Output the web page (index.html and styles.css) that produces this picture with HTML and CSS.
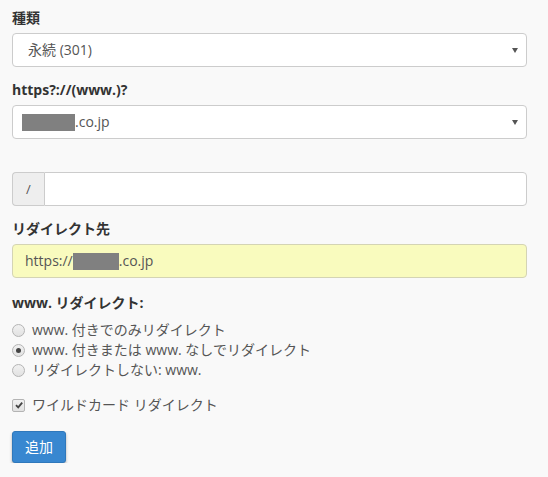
FILE: index.html
```html
<!DOCTYPE html>
<html lang="ja">
<head>
<meta charset="utf-8">
<title>リダイレクトの追加</title>
<link rel="stylesheet" href="styles.css">
</head>
<body>
<form class="form">
  <div class="form-group">
    <label class="label">種類</label>
    <div class="select select-indent"><span class="select-text">永続 (301)</span><span class="caret"></span></div>
  </div>
  <div class="form-group">
    <label class="label">https?://(www.)?</label>
    <div class="select"><span class="select-text"><span class="redact redact-a"></span>.co.jp</span><span class="caret"></span></div>
  </div>
  <div class="form-group spaced">
    <div class="input-group">
      <span class="addon">/</span>
      <div class="control control-plain"></div>
    </div>
  </div>
  <div class="form-group">
    <label class="label">リダイレクト先</label>
    <div class="control control-yellow">https://<span class="redact redact-b"></span>.co.jp</div>
  </div>
  <div class="form-group group-www">
    <label class="label">www. リダイレクト:</label>
    <div class="radios">
      <div class="option"><span class="radio"></span><span>www. 付きでのみリダイレクト</span></div>
      <div class="option"><span class="radio checked"></span><span>www. 付きまたは www. なしでリダイレクト</span></div>
      <div class="option"><span class="radio"></span><span>リダイレクトしない: www.</span></div>
    </div>
  </div>
  <div class="form-group group-check">
    <div class="option"><span class="checkbox"><svg viewBox="0 0 10 10" width="10" height="10"><path d="M2 5.2 L4.2 7.4 L8.2 2.6" fill="none" stroke="#444" stroke-width="1.8"/></svg></span><span>ワイルドカード リダイレクト</span></div>
  </div>
  <div class="actions">
    <button type="button" class="btn">追加</button>
  </div>
</form>
</body>
</html>
```

FILE: styles.css
```css
html, body {
  margin: 0;
  padding: 0;
  background: #f9f9f9;
}
body {
  font-family: "Open Sans", "Noto Sans CJK JP", sans-serif;
  font-size: 14px;
  line-height: 20px;
  color: #333;
}
.form {
  padding: 8px 21px 0 12px;
}
.form-group {
  margin-bottom: 13px;
}
.label {
  display: block;
  font-weight: bold;
  color: #333;
  margin-bottom: 5px;
}
.select, .control {
  box-sizing: border-box;
  height: 34px;
  border: 1px solid #ccc;
  border-radius: 4px;
  background: #fff;
  color: #555;
  display: flex;
  align-items: center;
}
.select {
  justify-content: space-between;
  padding: 0 8px 0 9px;
}
.select-indent {
  padding-left: 15px;
}
.select-text {
  display: flex;
  align-items: center;
}
.caret {
  width: 0;
  height: 0;
  border-left: 3px solid transparent;
  border-right: 3px solid transparent;
  border-top: 5px solid #555;
}
.redact {
  display: inline-block;
  height: 17px;
  background: #808080;
}
.redact-a { width: 53px; }
.redact-b { width: 46px; }
.spaced {
  margin-top: 33px;
}
.input-group {
  display: flex;
  height: 34px;
}
.addon {
  box-sizing: border-box;
  width: 32px;
  border: 1px solid #ccc;
  border-right: 0;
  border-radius: 4px 0 0 4px;
  background: #eee;
  color: #555;
  display: flex;
  align-items: center;
  justify-content: center;
  font-size: 13px;
}
.control-plain {
  flex: 1;
  height: 34px;
  border-radius: 0 4px 4px 0;
}
.control-yellow {
  background: #f9fbbe;
  border-color: #d4d4b4;
  padding-left: 12px;
}
.group-www {
  margin-top: 15px;
  margin-bottom: 15px;
}
.radios {
  margin-top: 7px;
}
.option {
  display: flex;
  align-items: center;
  color: #555;
  height: 20px;
}
.radio {
  box-sizing: border-box;
  width: 13px;
  height: 13px;
  border-radius: 50%;
  border: 1px solid #b4b4b4;
  background: linear-gradient(#f1f1f1, #e2e2e2);
  margin-right: 7px;
  display: flex;
  align-items: center;
  justify-content: center;
}
.radio.checked::after {
  content: "";
  width: 5px;
  height: 5px;
  border-radius: 50%;
  background: #444;
}
.checkbox {
  box-sizing: border-box;
  width: 13px;
  height: 13px;
  border: 1px solid #b4b4b4;
  border-radius: 2px;
  background: linear-gradient(#f1f1f1, #e2e2e2);
  margin-right: 7px;
  display: flex;
  align-items: center;
  justify-content: center;
}
.group-check {
  margin-bottom: 16px;
}
.btn {
  font-family: "Open Sans", "Noto Sans CJK JP", sans-serif;
  font-size: 14px;
  line-height: 20px;
  color: #fff;
  background: #3887d0;
  border: 1px solid #2f78bb;
  border-radius: 3px;
  padding: 5px 12px;
  box-shadow: 0 2px 3px rgba(0, 0, 0, 0.3);
}
```
